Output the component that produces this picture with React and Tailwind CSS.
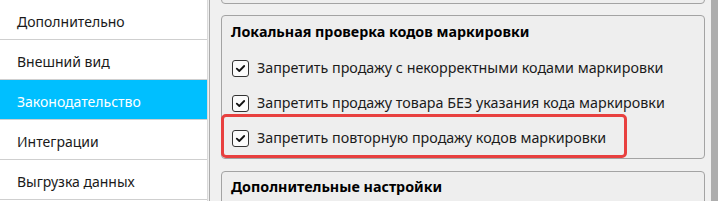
const menu = [
  { label: "Дополнительно" },
  { label: "Внешний вид" },
  { label: "Законодательство", active: true },
  { label: "Интеграции" },
  { label: "Выгрузка данных" },
];

const options = [
  "Запретить продажу с некорректными кодами маркировки",
  "Запретить продажу товара БЕЗ указания кода маркировки",
  "Запретить повторную продажу кодов маркировки",
];

const CheckBox = () => (
  <div className="w-[17px] h-[17px] shrink-0 rounded-[3px] border border-[#333333] bg-[#fbfbfb] flex items-center justify-center">
    <svg width="11" height="11" viewBox="0 0 11 11" fill="none">
      <path
        d="M1.8 5.6 L4.3 8 L9.2 3"
        stroke="#111111"
        strokeWidth="1.8"
        strokeLinecap="round"
        strokeLinejoin="round"
      />
    </svg>
  </div>
);

const App = () => {
  return (
    <div
      className="flex w-[718px] h-[201px] overflow-hidden bg-[#f0f0f0] text-[14.3px]"
      style={{ fontFamily: '"Noto Sans", "Open Sans", sans-serif' }}
    >
      {/* Sidebar */}
      <div className="w-[208px] shrink-0 bg-white border-r border-[#dadada] text-[14px]">
        {menu.map((item) => (
          <div
            key={item.label}
            className={`h-[40px] flex items-center pl-[17px] pt-[4px] border-b border-[#cfcfcf] ${
              item.active ? "bg-[#00bfff] text-white" : "text-[#1a1a1a]"
            }`}
          >
            {item.label}
          </div>
        ))}
      </div>

      {/* Settings panel */}
      <div className="flex-1 flex ml-px border-l border-[#ababab]">
        <div className="flex-1 pl-[11px] pr-[6px] flex flex-col">
          {/* cut-off group above */}
          <div className="h-[20px] -mt-[16px] shrink-0 rounded-[4px] border border-[#a3a3a3] bg-[#eeeeee]" />

          {/* Local check group */}
          <div className="mt-[11px] shrink-0 rounded-[4px] border border-[#a3a3a3] bg-[#eeeeee] pl-[9px] pb-[3px]">
            <div className="h-[34px] pb-[2px] flex items-center font-bold text-black">
              Локальная проверка кодов маркировки
            </div>
            {options.map((text, i) => (
              <div key={text} className="relative h-[35px] pt-px flex items-center gap-[8px] text-[#1b1b1b]">
                <div className="pl-px">
                  <CheckBox />
                </div>
                <span>{text}</span>
                {i === 2 && (
                  <div className="absolute -left-[10px] top-[-6px] w-[406px] h-[44px] rounded-[5px] border-[3px] border-[#e8403f]" />
                )}
              </div>
            ))}
          </div>

          {/* Additional settings group */}
          <div className="mt-[12px] shrink-0 h-[60px] rounded-[4px] border border-[#a3a3a3] bg-[#eeeeee] pl-[9px]">
            <div className="h-[29px] pt-px flex items-center font-bold text-black">Дополнительные настройки</div>
          </div>
        </div>
        <div className="w-[7px] shrink-0 bg-[#adadad]" />
      </div>
    </div>
  );
};

export default App;
